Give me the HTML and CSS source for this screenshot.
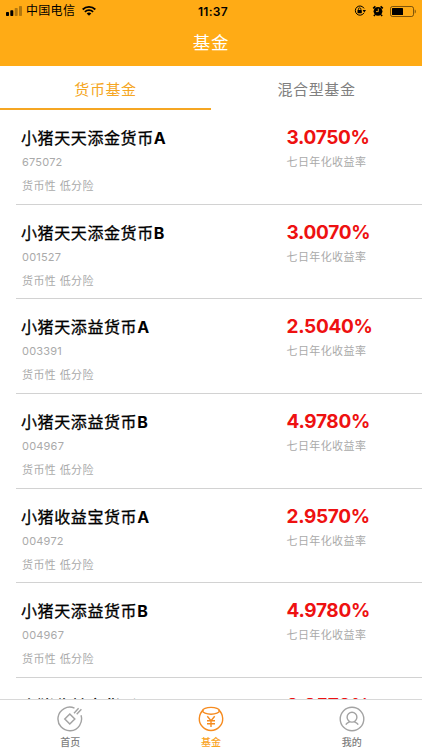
FILE: index.html
```html
<!DOCTYPE html>
<html lang="zh-CN">
  <head>
    <meta charset="UTF-8" />
    <meta name="viewport" content="width=device-width, initial-scale=1.0" />
    <title>基金</title>
    <link rel="stylesheet" href="styles.css">
  </head>
  <body>
    <header class="header">
      <div class="status-bar">
        <div class="status-left">
          <svg class="signal" width="17" height="10" viewBox="0 0 17 10">
            <rect x="0" y="6" width="3" height="4" rx="0.7" />
            <rect x="4.3" y="4.2" width="3" height="5.8" rx="0.7" />
            <rect x="8.7" y="2" width="3" height="8" rx="0.7" opacity="0.3" />
            <rect x="13" y="0" width="3" height="10" rx="0.7" opacity="0.3" />
          </svg>
          <span class="carrier">中国电信</span>
          <svg class="wifi" width="14" height="10" viewBox="0 0 14 10">
            <path d="M0.7 3.5C4.2 0.1 9.8 0.1 13.3 3.5M2.9 5.8C5.2 3.6 8.8 3.6 11.1 5.8" fill="none" stroke="#000" stroke-width="1.8" />
            <path d="M4.7 7.5C6 6.3 8 6.3 9.3 7.5L7 9.8Z" />
          </svg>
        </div>
        <span class="time">11:37</span>
        <div class="status-right">
          <svg width="12" height="12" viewBox="0 0 12 12">
            <path d="M10 7.8A4.6 4.6 0 1 1 10 3.4" fill="none" stroke="#000" stroke-width="1" />
            <path d="M8.6 5H12L10.3 7.5Z" />
            <rect x="3.5" y="5" width="4.3" height="3.2" rx="0.4" />
            <path d="M4.4 5V4.1a1.25 1.25 0 0 1 2.5 0V5" fill="none" stroke="#000" stroke-width="0.8" />
          </svg>
          <svg width="12" height="12" viewBox="0 0 12 12">
            <circle cx="6" cy="6.3" r="4.4" />
            <path d="M1.2 3.4L3.4 1.3M10.8 3.4L8.6 1.3M2.9 9.7L1.9 10.9M9.1 9.7L10.1 10.9" stroke="#000" stroke-width="1.6" />
            <path d="M6.3 3.7V6.6H4" fill="none" stroke="#ffab15" stroke-width="0.9" />
          </svg>
          <svg width="26" height="11" viewBox="0 0 26 11">
            <rect x="0.5" y="0.5" width="23" height="10" rx="2" fill="none" stroke="#000" stroke-opacity="0.5" />
            <rect x="2" y="2" width="11" height="7" rx="0.5" />
            <path d="M24.7 3.5C26.2 4.2 26.2 6.8 24.7 7.5Z" opacity="0.5" />
          </svg>
        </div>
      </div>
      <h1 class="title">基金</h1>
    </header>

    <nav class="tabs">
      <a class="tab active">货币基金</a>
      <a class="tab">混合型基金</a>
    </nav>

    <main class="fund-list">
      <div class="fund">
        <div class="info">
          <h2>小猪天天添金货币<b>A</b></h2>
          <p class="code">675072</p>
          <p class="kind">货币性 低分险</p>
        </div>
        <div class="yield">
          <strong>3.0750%</strong>
          <p>七日年化收益率</p>
        </div>
      </div>
      <div class="fund">
        <div class="info">
          <h2>小猪天天添金货币<b>B</b></h2>
          <p class="code">001527</p>
          <p class="kind">货币性 低分险</p>
        </div>
        <div class="yield">
          <strong>3.0070%</strong>
          <p>七日年化收益率</p>
        </div>
      </div>
      <div class="fund">
        <div class="info">
          <h2>小猪天添益货币<b>A</b></h2>
          <p class="code">003391</p>
          <p class="kind">货币性 低分险</p>
        </div>
        <div class="yield">
          <strong>2.5040%</strong>
          <p>七日年化收益率</p>
        </div>
      </div>
      <div class="fund">
        <div class="info">
          <h2>小猪天添益货币<b>B</b></h2>
          <p class="code">004967</p>
          <p class="kind">货币性 低分险</p>
        </div>
        <div class="yield">
          <strong>4.9780%</strong>
          <p>七日年化收益率</p>
        </div>
      </div>
      <div class="fund">
        <div class="info">
          <h2>小猪收益宝货币<b>A</b></h2>
          <p class="code">004972</p>
          <p class="kind">货币性 低分险</p>
        </div>
        <div class="yield">
          <strong>2.9570%</strong>
          <p>七日年化收益率</p>
        </div>
      </div>
      <div class="fund">
        <div class="info">
          <h2>小猪天添益货币<b>B</b></h2>
          <p class="code">004967</p>
          <p class="kind">货币性 低分险</p>
        </div>
        <div class="yield">
          <strong>4.9780%</strong>
          <p>七日年化收益率</p>
        </div>
      </div>
      <div class="fund">
        <div class="info">
          <h2>小猪收益宝货币<b>B</b></h2>
        </div>
        <div class="yield">
          <strong>2.9570%</strong>
        </div>
      </div>
    </main>

    <footer class="tab-bar">
      <a class="tab-item">
        <svg width="26" height="26" viewBox="0 0 26 26">
          <path d="M17.5 2.1A11.8 11.8 0 1 0 24 9.3M17 7.2L21.6 2.2M19.7 8.2L24.4 3.2" />
          <path d="M12.8 8L17.8 13L12.8 18L7.8 13Z" stroke-width="1.5" />
        </svg>
        <span>首页</span>
      </a>
      <a class="tab-item active">
        <svg width="26" height="26" viewBox="0 0 26 26">
          <path d="M5.4 3.9A11.7 11.7 0 1 0 20.6 3.9" />
          <ellipse cx="13" cy="4.8" rx="8.4" ry="3.4" />
          <path d="M9.3 10.2L13 14.6L16.7 10.2M13 14.6V21M9 14.7H17M9 17.7H17" />
        </svg>
        <span>基金</span>
      </a>
      <a class="tab-item">
        <svg width="26" height="26" viewBox="0 0 26 26">
          <circle cx="13" cy="13" r="11.8" />
          <circle cx="13" cy="11.2" r="4.9" />
          <path d="M6.8 18.7C7.6 17.2 9 16.6 10.8 15.7M19.2 18.7C18.4 17.2 17 16.6 15.2 15.7" />
        </svg>
        <span>我的</span>
      </a>
    </footer>
  </body>
</html>
```
FILE: styles.css
```css
* {
  box-sizing: border-box;
}
body {
  margin: 0;
  height: 750px;
  display: flex;
  flex-direction: column;
  overflow: hidden;
  background: #fff;
  font-family: Inter, "Noto Sans CJK SC", sans-serif;
}
h1,
h2,
p {
  margin: 0;
  font-weight: 400;
}
.header {
  flex: none;
  height: 66px;
  background: #ffab15;
}
.status-bar {
  display: grid;
  grid-template-columns: 1fr auto 1fr;
  align-items: center;
  height: 21px;
  padding: 1px 6px 0;
  font-size: 12px;
}
.status-left,
.status-right {
  display: flex;
  align-items: center;
}
.signal {
  margin-right: 3px;
}
.carrier {
  line-height: 18px;
  letter-spacing: 0.3px;
}
.wifi {
  margin-left: 7px;
}
.time {
  font-weight: 600;
  letter-spacing: 0.3px;
  padding-left: 4px;
}
.status-right {
  justify-content: flex-end;
  gap: 6px;
}
.title {
  color: #fff;
  font-size: 17.5px;
  line-height: 43px;
  letter-spacing: 0.7px;
  text-align: center;
}
.tabs {
  flex: none;
  display: flex;
  height: 44px;
}
.tab {
  flex: 1;
  color: #808080;
  font-size: 15px;
  line-height: 47px;
  letter-spacing: 0.6px;
  text-align: center;
}
.tab.active {
  color: #f5a623;
  border-bottom: 2px solid #f5a623;
}
.fund-list {
  flex: 1;
  min-height: 0;
  overflow: hidden;
}
.fund {
  display: flex;
  height: 94.7px;
  margin-left: 16px;
  padding: 16px 0 0 5px;
  border-bottom: 1px solid #d2d2d2;
}
.info {
  width: 265.5px;
}
.info h2 {
  color: #000;
  font-size: 16px;
  font-weight: 400;
  line-height: 24px;
  letter-spacing: 0.6px;
  -webkit-text-stroke: 0.3px #000;
}
.info b {
  font-weight: 700;
  -webkit-text-stroke: 0;
}
.code,
.kind,
.yield p {
  color: #aaa;
  font-size: 11px;
  line-height: 16px;
  letter-spacing: 0.4px;
}
.code,
.kind {
  padding-left: 1px;
}
.code {
  margin-top: 4px;
  letter-spacing: 0.2px;
}
.kind {
  margin-top: 8px;
}
.yield strong {
  display: block;
  color: #ee1111;
  font-size: 19px;
  font-weight: 700;
  line-height: 24px;
  letter-spacing: -0.3px;
}
.yield p {
  margin-top: 4px;
}
.tab-bar {
  flex: none;
  display: flex;
  height: 51px;
  padding-top: 6px;
  border-top: 1px solid #d8d8d8;
}
.tab-item {
  flex: 1;
  display: flex;
  flex-direction: column;
  align-items: center;
  color: #808080;
  font-size: 10px;
  font-weight: 500;
  line-height: 14px;
}
.tab-item svg {
  fill: none;
  stroke: #a3a3a3;
  stroke-width: 1.4;
}
.tab-item span {
  margin-top: 3px;
}
.tab-item.active {
  color: #f9a41f;
}
.tab-item.active svg {
  stroke: #f68b1f;
}
```
